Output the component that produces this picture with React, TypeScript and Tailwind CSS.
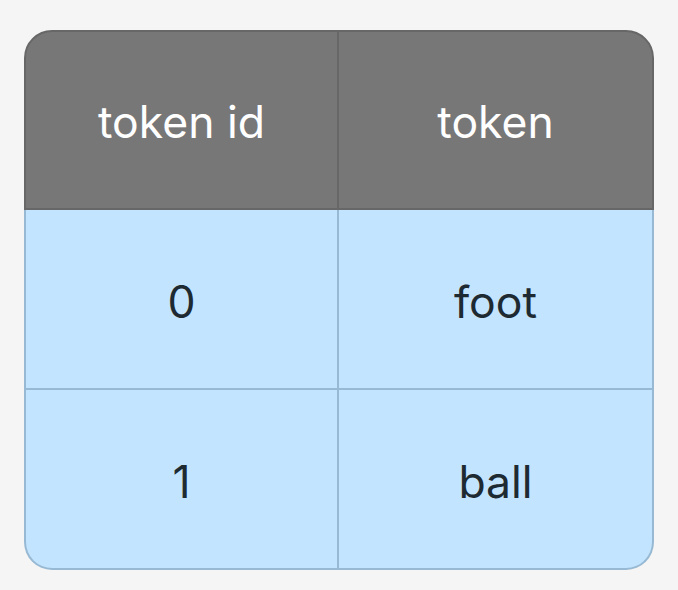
import React from "react";

const rows = [
   { id: "0", token: "foot" },
   { id: "1", token: "ball" },
];

const App = () => {
   return (
      <div className="w-[678px] h-[590px] bg-[#f5f5f5] pt-[30px] pl-[24px] font-['Inter',sans-serif]">
         <div className="w-[630px] flex flex-col">
            <div className="grid grid-cols-2 h-[180px] bg-[#777777] border-2 border-[#676767] rounded-t-[28px] text-white text-[44.5px]">
               <div className="flex items-center justify-center pt-[4px] border-r-2 border-[#676767]">
                  token id
               </div>
               <div className="flex items-center justify-center pt-[4px]">token</div>
            </div>
            <div className="bg-[#c3e4fe] border-x-2 border-b-2 border-[#98b9d3] rounded-b-[28px] text-[#1e2a31] text-[44.5px]">
               {rows.map((row, idx) => (
                  <div
                     key={idx}
                     className={
                        idx === 0
                           ? "grid grid-cols-2 h-[180px] border-b-2 border-[#98b9d3]"
                           : "grid grid-cols-2 h-[178px]"
                     }
                  >
                     <div className="flex items-center justify-center pt-[6px] border-r-2 border-[#98b9d3]">
                        {row.id}
                     </div>
                     <div className="flex items-center justify-center pt-[6px]">
                        {row.token}
                     </div>
                  </div>
               ))}
            </div>
         </div>
      </div>
   );
};

export default App;
